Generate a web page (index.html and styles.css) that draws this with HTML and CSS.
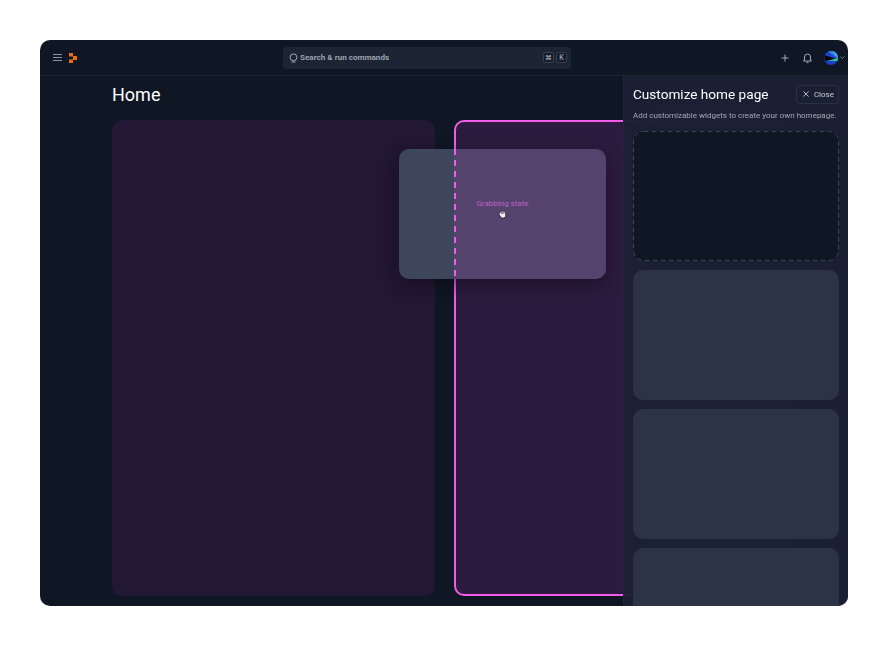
FILE: index.html
```html
<!DOCTYPE html>
<html lang="en">
<head>
<meta charset="utf-8">
<title>Home</title>
<link rel="stylesheet" href="styles.css">
</head>
<body>
<div class="app">
  <header class="topbar">
    <div class="brand">
      <svg class="menu-icon" viewBox="0 0 9 7" width="9" height="7"><path d="M0 .5h9M0 3.500h9M0 6.500h9" stroke="#8a92a3" stroke-width="1" fill="none"/></svg>
      <svg class="logo" viewBox="0 0 8 10" width="8" height="10"><path d="M0 0h4v3.500H0zM0 6.500h4V10H0zM4 3h4v4H4z" fill="#ef6a12"/></svg>
    </div>
    <div class="search">
      <svg class="search-icon" viewBox="0 0 9 10" width="9" height="10"><circle cx="4.500" cy="4.300" r="3.400" stroke="#a3a9b5" fill="none"/><path d="M2.500 9h4" stroke="#a3a9b5"/></svg>
      <span class="search-text">Search &amp; run commands</span>
      <span class="keys"><kbd class="key">⌘</kbd><kbd class="key">K</kbd></span>
    </div>
    <div class="actions">
      <svg viewBox="0 0 8 8" width="8" height="8"><path d="M4 .5v7M.5 4h7" stroke="#a3a9b5" fill="none"/></svg>
      <svg viewBox="0 0 9 10" width="9" height="10"><path d="M1.500 7V4a3 3 0 0 1 6 0v3l1 1H.5zM3.500 9.500h2" stroke="#a3a9b5" fill="none"/></svg>
      <span class="profile">
        <svg viewBox="0 0 14 14" width="14" height="14"><defs><clipPath id="av"><circle cx="7" cy="7" r="7"/></clipPath></defs><g clip-path="url(#av)"><rect width="14" height="14" fill="#1c3fc4"/><path d="M3 0h11v8z" fill="#2f7fe0"/><path d="M8 0h6v7z" fill="#4fb4e8"/><path d="M0 4 12 8 1 10z" fill="#05060a"/><path d="M3 10 14 7v3z" fill="#2fc49a"/></g></svg>
        <svg viewBox="0 0 5 3" width="5" height="3"><path d="M.5.500 2.500 2.500 4.500.5" stroke="#8a92a3" stroke-width=".8" fill="none"/></svg>
      </span>
    </div>
  </header>
  <div class="content">
    <main class="main">
      <h1 class="title">Home</h1>
      <div class="columns">
        <section class="column"></section>
        <section class="column column-target"></section>
      </div>
      <div class="ghost">
        <div class="ghost-left"></div>
        <div class="ghost-dash"></div>
        <div class="ghost-right"></div>
        <div class="ghost-label">
          <span>Grabbing state</span>
          <svg viewBox="0 0 10 11" width="9" height="10"><path d="M2 4.500C2 3 3 2.500 4 2.800 4.500 1.800 6 1.800 6.500 2.800 7.500 2.400 8.500 3 8.500 4.200V7c0 2-1.200 3-3 3-1.500 0-2.300-.6-3-2L1.300 6C1 5 1.700 4.600 2 4.500Z" fill="#f4f1f6" stroke="#17121f" stroke-width=".8"/><path d="M4 3v2.500M5.300 3v2.500M6.600 3v2.500" stroke="#17121f" stroke-width=".6"/></svg>
        </div>
      </div>
    </main>
    <aside class="panel">
      <div class="panel-head">
        <h2 class="panel-title">Customize home page</h2>
        <button class="close" type="button">
          <svg viewBox="0 0 7 7" width="6" height="6"><path d="M.5.500l6 6M6.500.5l-6 6" stroke="#c8ccd4" fill="none"/></svg>
          Close
        </button>
      </div>
      <p class="panel-desc">Add customizable widgets to create your own homepage.</p>
      <div class="widgets">
        <div class="slot"><svg class="slot-outline" viewBox="0 0 206 130"><rect x=".5" y=".5" width="205" height="129" rx="10"/></svg></div>
        <div class="widget"></div>
        <div class="widget"></div>
        <div class="widget"></div>
      </div>
    </aside>
  </div>
</div>
</body>
</html>
```
FILE: styles.css
```css
* { box-sizing: border-box; }
html, body { margin: 0; height: 100%; background: #fff; }
body { padding: 40px; font-family: "Roboto", "Liberation Sans", sans-serif; overflow: hidden; }
.app { width: 808px; height: 566px; background: #0f1624; border-radius: 10px; overflow: hidden; display: flex; flex-direction: column; }

.topbar { flex: 0 0 36px; display: flex; align-items: center; border-bottom: 1px solid #1c2333; padding: 0 3px 0 13px; }
.brand { display: flex; align-items: center; gap: 7px; width: 230px; }
.search { width: 288px; height: 22px; background: #1d2434; border-radius: 4px; display: flex; align-items: center; padding: 0 4px 0 6px; gap: 2px; }
.search-text { flex: 1; font-size: 8.100px; line-height: 10px; font-weight: 700; color: #9da3af; padding-bottom: 2px; }
.keys { display: flex; gap: 2px; }
.key { width: 11px; height: 11px; border: 1px solid #363e4e; border-radius: 2px; font-family: "Inter", sans-serif; font-size: 7px; color: #b4b9c3; display: flex; align-items: center; justify-content: center; background: #161c2b; }
.actions { margin-left: auto; display: flex; align-items: center; gap: 14px; }
.profile { display: flex; align-items: center; gap: 2px; margin-left: -2px; }

.content { flex: 1; position: relative; overflow: hidden; }
.main { height: 100%; padding: 6px 0 0 72px; position: relative; overflow: hidden; }
.title { margin: 0 0 13px; font-size: 18px; line-height: 25px; font-weight: 400; color: #fff; }
.columns { display: grid; grid-template-columns: 323px 323px; gap: 19px; }
.column { height: 476px; border-radius: 10px; background: #221734; }
.column-target { background: #2c1b3e; border: 2px solid #f25ce8; }

.ghost { position: absolute; left: 359px; top: 73px; width: 207px; height: 130px; border-radius: 10px; overflow: hidden; display: flex; box-shadow: 0 6px 18px rgba(8, 6, 16, .45); }
.ghost-left { width: 55px; background: #3d465b; }
.ghost-dash { width: 2px; background: repeating-linear-gradient(to bottom, #f25ce8 0 6px, #56436d 6px 11px); }
.ghost-right { flex: 1; background: #56436d; }
.ghost-label { position: absolute; inset: 0; display: flex; flex-direction: column; align-items: center; justify-content: center; font-size: 8px; line-height: 10px; color: #bf5fcb; padding-bottom: 11px; font-weight: 400; }

.panel { position: absolute; top: 0; right: 0; bottom: 0; width: 225px; padding: 8px 9px 0 9px; background: rgba(27, 33, 52, .92); backdrop-filter: blur(24px); border-left: 1px solid #1f2637; }
.panel-head { display: flex; align-items: center; justify-content: space-between; height: 20px; }
.panel-title { margin: 0; font-size: 13.600px; font-weight: 400; color: #fff; }
.close { height: 19px; padding: 0 4px 0 6px; display: flex; align-items: center; gap: 5px; background: transparent; border: 1px solid #283043; border-radius: 3px; color: #c8ccd4; font-family: inherit; font-size: 8px; }
.panel-desc { margin: 6px 0 10px; font-size: 8px; line-height: 11px; color: #a4aab6; white-space: nowrap; }
.widgets { display: flex; flex-direction: column; gap: 9px; }
.slot, .widget { flex: none; height: 130px; border-radius: 10px; }
.slot { background: #0f1624; }
.slot-outline { display: block; width: 206px; height: 130px; }
.slot-outline rect { fill: none; stroke: #3a4254; stroke-dasharray: 5 3; }
.widget { background: #2d3347; }
```
